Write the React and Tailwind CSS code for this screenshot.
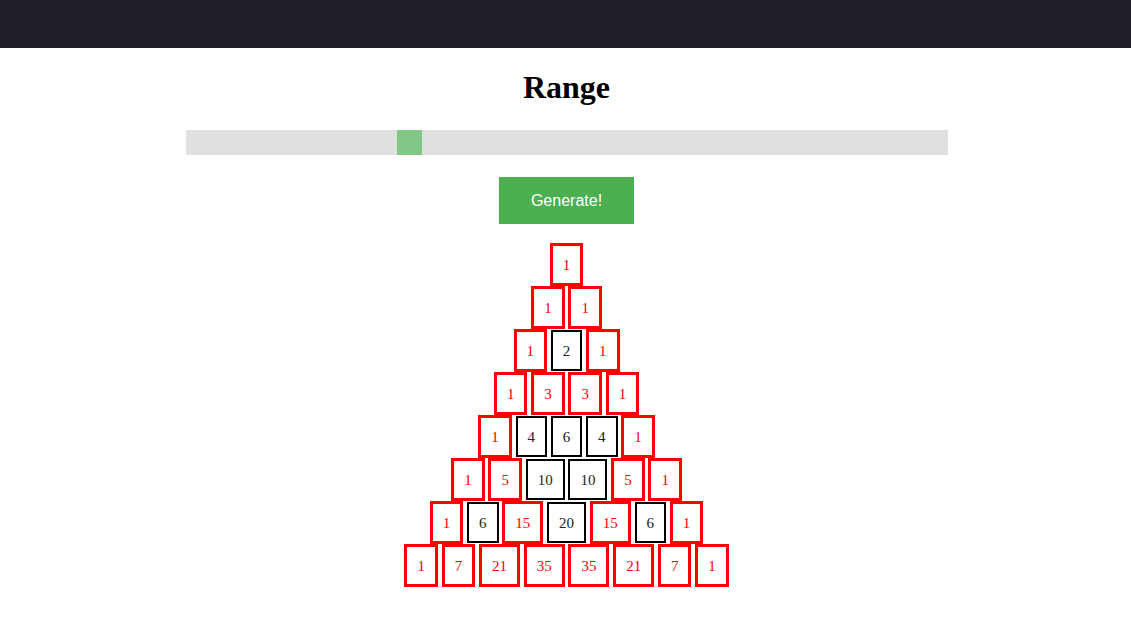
import React from 'react';

function buildRows(n) {
  const rows = [];
  for (let i = 0; i < n; i++) {
    const row = [1];
    for (let j = 1; j < i; j++) {
      row.push(rows[i - 1][j - 1] + rows[i - 1][j]);
    }
    if (i > 0) row.push(1);
    rows.push(row);
  }
  return rows;
}

function Cell({ value }) {
  const odd = value % 2 === 1;
  return (
    <div
      className={
        odd
          ? 'border-[3px] border-[#ff0000] text-[#ff0000] px-[10px] pt-[11px] pb-[9px] leading-[17px]'
          : 'border-2 border-black text-[#222] px-[10px] pt-[11px] pb-[9px] leading-[17px]'
      }
    >
      {value}
    </div>
  );
}

export default function App() {
  const rows = buildRows(8);

  return (
    <div className="min-h-[637px] bg-white font-['Liberation_Serif',serif]">
      <header className="h-12 bg-[#1f1f29]" />

      <main className="pl-[2px]">
        <h1 className="mt-[21px] text-center text-[32px] font-bold leading-[37px] text-black">Range</h1>

        <div className="mx-auto mt-[24px] flex h-[25px] w-[762px] bg-[#e0e0e0]">
          <div className="w-[211px]" />
          <div className="h-[25px] w-[25px] bg-[#82c785]" />
        </div>

        <div className="mt-[22px] flex justify-center">
          <button className="h-[47px] bg-[#4caf50] px-8 pt-px font-['Liberation_Sans',Arial,sans-serif] text-base text-white">
            Generate!
          </button>
        </div>

        <div className="mt-[19px] flex flex-col text-[15px]">
          {rows.map((row, i) => (
            <div key={i} className="flex items-baseline justify-center gap-[3.75px]">
              {row.map((v, j) => (
                <Cell key={j} value={v} />
              ))}
            </div>
          ))}
        </div>
      </main>
    </div>
  );
}
